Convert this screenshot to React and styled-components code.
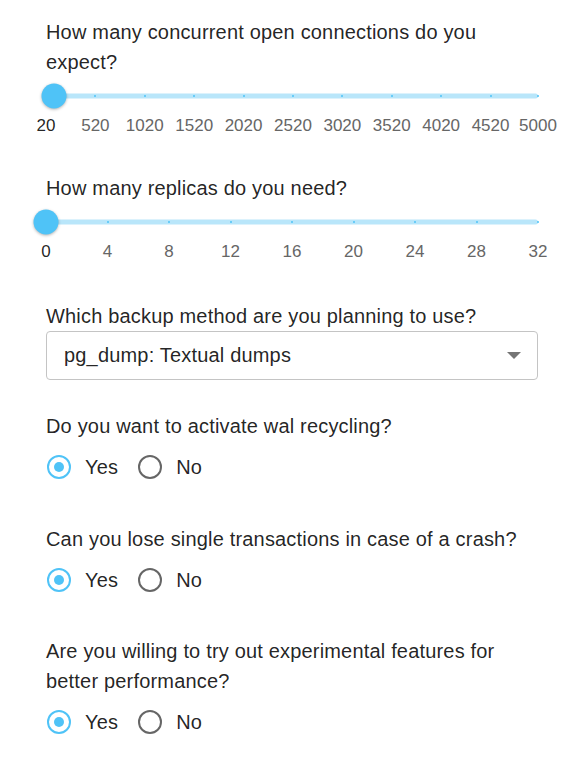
import React, { useState } from 'react';
import styled, { createGlobalStyle } from 'styled-components';

const GlobalStyle = createGlobalStyle`
  body {
    margin: 0;
    background: #ffffff;
    font-family: "Liberation Sans", Arial, sans-serif;
    color: rgba(0, 0, 0, 0.87);
  }
`;

const ACCENT = '#4fc3f7';

const Page = styled.div`
  width: 578px;
  box-sizing: border-box;
  padding: 17px 40px 0 46px;
`;

const Field = styled.section`
  margin-bottom: ${({ spacing }) => spacing}px;
`;

const Question = styled.p`
  margin: 0;
  font-size: 20px;
  line-height: 30px;
  letter-spacing: 0.18px;
  color: rgba(0, 0, 0, 0.87);
`;

const SliderRoot = styled.div`
  position: relative;
  height: 24px;
  margin-top: ${({ offset }) => offset}px;
`;

const Rail = styled.div`
  position: absolute;
  left: 0;
  right: 0;
  top: 50%;
  height: 5px;
  transform: translateY(-50%);
  border-radius: 3px;
  background: #b9e6fa;
`;

const Dot = styled.span`
  position: absolute;
  top: 50%;
  width: 2px;
  height: 2px;
  border-radius: 50%;
  background: ${ACCENT};
  transform: translate(-50%, -50%);
`;

const Thumb = styled.span`
  position: absolute;
  top: 50%;
  width: 25px;
  height: 25px;
  border-radius: 50%;
  background: ${ACCENT};
  box-shadow: 0 1px 3px rgba(0, 0, 0, 0.3);
  transform: translate(-50%, -50%);
`;

const Ticks = styled.div`
  position: relative;
  height: 20px;
  margin-top: ${({ offset }) => offset}px;
`;

const Tick = styled.span`
  position: absolute;
  top: 0;
  font-size: 17px;
  line-height: 20px;
  white-space: nowrap;
  color: ${({ active }) => (active ? 'rgba(0,0,0,0.87)' : '#666666')};
  transform: translateX(-50%);
`;

const SelectBox = styled.div`
  display: flex;
  align-items: center;
  justify-content: space-between;
  height: 49px;
  box-sizing: border-box;
  padding: 0 16px 0 17px;
  border: 1px solid #c4c4c4;
  border-radius: 4px;
  font-size: 20px;
  letter-spacing: 0.18px;
  color: rgba(0, 0, 0, 0.87);
`;

const RadioGroup = styled.div`
  display: flex;
  align-items: center;
  gap: 19px;
  margin-top: 14px;
  height: 24px;
`;

const RadioOption = styled.label`
  display: flex;
  align-items: center;
  gap: 14px;
  font-size: 20px;
  letter-spacing: 0.18px;
  cursor: pointer;
`;

const RadioRing = styled.span`
  display: flex;
  align-items: center;
  justify-content: center;
  width: 24px;
  height: 24px;
  box-sizing: border-box;
  margin-left: 1px;
  border-radius: 50%;
  border: 2.5px solid ${({ checked }) => (checked ? ACCENT : '#666666')};

  &::after {
    content: '';
    width: 10px;
    height: 10px;
    border-radius: 50%;
    background: ${ACCENT};
    display: ${({ checked }) => (checked ? 'block' : 'none')};
  }
`;

const Slider = ({ min, max, value, marks, offset }) => {
  const pct = v => `${((v - min) / (max - min)) * 100}%`;
  return (
    <>
      <SliderRoot offset={offset}>
        <Rail />
        {marks.slice(1).map(m => (
          <Dot key={m} style={{ left: pct(m) }} />
        ))}
        <Thumb style={{ left: pct(value) }} />
      </SliderRoot>
      <Ticks offset={8}>
        {marks.map((m, i) => (
          <Tick key={m} active={i === 0} style={{ left: pct(m) }}>
            {m}
          </Tick>
        ))}
      </Ticks>
    </>
  );
};

const YesNo = ({ initial = 'yes' }) => {
  const [value, setValue] = useState(initial);
  return (
    <RadioGroup>
      {['yes', 'no'].map(opt => (
        <RadioOption key={opt} onClick={() => setValue(opt)}>
          <RadioRing checked={value === opt} />
          {opt === 'yes' ? 'Yes' : 'No'}
        </RadioOption>
      ))}
    </RadioGroup>
  );
};

const connectionMarks = [20, 520, 1020, 1520, 2020, 2520, 3020, 3520, 4020, 4520, 5000];
const replicaMarks = [0, 4, 8, 12, 16, 20, 24, 28, 32];

const App = () => (
  <Page>
    <GlobalStyle />
    <Field spacing={37}>
      <Question>How many concurrent open connections do you expect?</Question>
      <Slider min={20} max={5000} value={100} marks={connectionMarks} offset={7} />
    </Field>
    <Field spacing={39}>
      <Question>How many replicas do you need?</Question>
      <Slider min={0} max={32} value={0} marks={replicaMarks} offset={7} />
    </Field>
    <Field spacing={31}>
      <Question>Which backup method are you planning to use?</Question>
      <SelectBox>
        pg_dump: Textual dumps
        <svg width="14" height="7" viewBox="0 0 14 7">
          <path d="M0 0h14L7 7z" fill="#757575" />
        </svg>
      </SelectBox>
    </Field>
    <Field spacing={45}>
      <Question>Do you want to activate wal recycling?</Question>
      <YesNo />
    </Field>
    <Field spacing={44}>
      <Question>Can you lose single transactions in case of a crash?</Question>
      <YesNo />
    </Field>
    <Field spacing={0}>
      <Question>Are you willing to try out experimental features for better performance?</Question>
      <YesNo />
    </Field>
  </Page>
);

export default App;
